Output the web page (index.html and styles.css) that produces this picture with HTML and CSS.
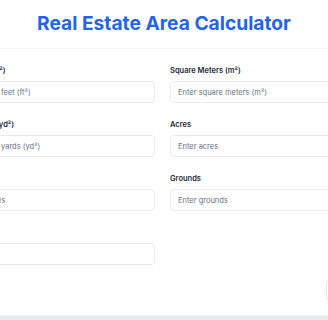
FILE: index.html
```html
<!DOCTYPE html>
<html lang="en">
<head>
  <meta charset="UTF-8" />
  <meta name="viewport" content="width=device-width, initial-scale=1.0"/>
  <title>Real Estate Area Calculator</title>
  <link rel="stylesheet" href="styles.css">
</head>
<body>
  <header class="topo">
    <h1 class="titulo">Real Estate Area Calculator</h1>
  </header>

  <main class="calc">
    <form class="grade" id="formArea">
      <div class="campo">
        <label for="sqft">Square Feet (ft²)</label>
        <input type="number" id="sqft" placeholder="Enter square feet (ft²)" />
      </div>
      <div class="campo">
        <label for="sqm">Square Meters (m²)</label>
        <input type="number" id="sqm" placeholder="Enter square meters (m²)" />
      </div>
      <div class="campo">
        <label for="sqyd">Square Yards (yd²)</label>
        <input type="number" id="sqyd" placeholder="Enter square yards (yd²)" />
      </div>
      <div class="campo">
        <label for="acres">Acres</label>
        <input type="number" id="acres" placeholder="Enter acres" />
      </div>
      <div class="campo">
        <label for="hect">Hectares</label>
        <input type="number" id="hect" placeholder="Enter hectares" />
      </div>
      <div class="campo">
        <label for="grounds">Grounds</label>
        <input type="number" id="grounds" placeholder="Enter grounds" />
      </div>
      <div class="campo">
        <label for="cents">Cents</label>
        <input type="number" id="cents" placeholder="Enter cents" />
      </div>
    </form>

    <div class="acoes">
      <button type="button" class="btn-limpar">Reset</button>
    </div>
  </main>

  <div class="rodape"></div>
</body>
</html>
```

FILE: styles.css
```css
* { box-sizing: border-box; }

body {
  margin: 0;
  font-family: 'Inter', sans-serif;
  background: #fff;
  overflow: hidden;
}

.topo {
  height: 49px;
  display: flex;
  justify-content: center;
  align-items: center;
  border-bottom: 1px solid #f3f4f6;
  padding-bottom: 2px;
}

.titulo {
  margin: 0;
  color: #2563eb;
  font-size: 19.2px;
  font-weight: 700;
  line-height: 24px;
}

.calc {
  width: 433px;
  margin-left: calc(50% - 218px);
  padding-top: 15px;
}

.grade {
  display: grid;
  grid-template-columns: 1fr 1fr;
  column-gap: 15px;
  row-gap: 15px;
}

.campo label {
  display: block;
  font-size: 7.5px;
  line-height: 13px;
  font-weight: 600;
  color: #1f2937;
  margin-bottom: 4px;
}

.campo input {
  display: block;
  width: 100%;
  height: 22px;
  padding: 0 7px;
  border: 1px solid #e9eaee;
  border-radius: 4px;
  font-family: inherit;
  font-size: 7.5px;
  color: #1f2937;
  outline: none;
}

.campo input::placeholder {
  color: #6b7280;
}

.acoes {
  display: flex;
  justify-content: flex-end;
  margin-top: 14px;
}

.btn-limpar {
  height: 22px;
  width: 53px;
  background: #fff;
  border: 1px solid #e5e7eb;
  border-radius: 4px;
  font-family: inherit;
  font-size: 7.5px;
  color: #374151;
}

.rodape {
  margin-top: 14px;
  height: 20px;
  background: #e8e9eb;
  border-top: 1px solid #eff0f1;
}
```
